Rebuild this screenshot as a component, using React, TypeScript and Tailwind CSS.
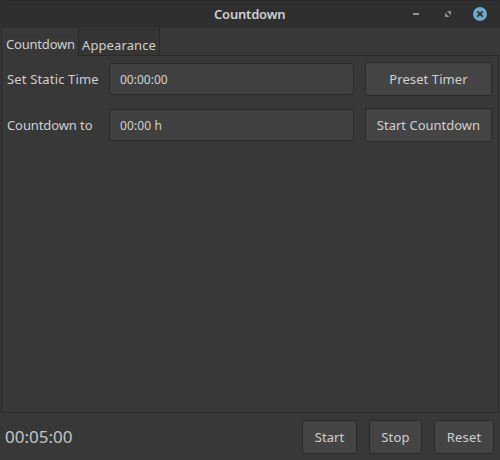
import type { ReactNode } from "react";

function Btn({ children, className = "" }: { children: ReactNode; className?: string }) {
  return (
    <button
      type="button"
      className={`flex h-[34px] shrink-0 items-center justify-center whitespace-nowrap rounded-[3px] border border-[#292929] bg-[#444444] pb-px ${className}`}
    >
      {children}
    </button>
  );
}

type RowProps = { label: string; labelClass: string; value: string; valueClass: string; action: string; actionClass: string };

function Row({ label, labelClass, value, valueClass, action, actionClass }: RowProps) {
  return (
    <div className="flex h-[34px] items-center">
      <label className={`w-[102px] shrink-0 whitespace-nowrap pb-px ${labelClass}`}>{label}</label>
      <div
        className={`flex h-8 w-[245px] shrink-0 items-center rounded-[3px] border border-[#292929] bg-[#404040] pl-[10px] pt-px ${valueClass}`}
      >
        {value}
      </div>
      <Btn className={`ml-[11px] w-[127px] ${actionClass}`}>{action}</Btn>
    </div>
  );
}

export default function App() {
  return (
    <div className="flex h-[460px] w-[500px] flex-col overflow-hidden bg-[#383838] font-['Noto_Sans',sans-serif] text-[13px] leading-4 text-[#d0d0d0]">
      <header className="flex h-7 shrink-0 items-center rounded-t-[3px] border-t border-[#292929] bg-[#2f2f2f]">
        <div className="w-[412px] pb-[2px] pl-[214px] text-[13px] font-semibold tracking-[-0.2px]">Countdown</div>
        <svg width="88" height="27" viewBox="412 1 88 27">
          <rect x="413" y="13" width="6" height="2" fill="#969696" />
          <path d="M447 11h4v4.5zM445 12.5v4.5h4.5z" fill="#8c8c8c" />
          <circle cx="480" cy="14" r="7" fill="#6cabcd" />
          <path d="M477.3 11.3l5.4 5.4m0-5.4l-5.4 5.4" stroke="#2f2f2f" strokeWidth="1.8" />
        </svg>
      </header>
      <nav className="flex h-7 shrink-0 px-px">
        <div className="flex w-[77px] shrink-0 items-center border-l border-[#292929] pl-1 pt-1">
          <span className="whitespace-nowrap border-y border-dotted border-[#333333] tracking-[-0.2px]">Countdown</span>
        </div>
        <div className="mt-px flex w-[82px] shrink-0 items-center border border-[#292929] bg-[#353535] pl-[3px] pt-1">
          <span className="tracking-[0.1px]">Appearance</span>
        </div>
        <div className="flex-1 border-b border-[#292929]" />
      </nav>
      <main className="mx-px flex h-[357px] shrink-0 flex-col gap-3 border border-t-0 border-[#292929] pl-[5px] pt-[6px]">
        <Row label="Set Static Time" labelClass="tracking-[0.16px]" value="00:00:00" valueClass="text-[12px]" action="Preset Timer" actionClass="tracking-[0.08px]" />
        <Row label="Countdown to" labelClass="tracking-[-0.1px]" value="00:00 h" valueClass="text-[12px] tracking-[0.1px]" action="Start Countdown" actionClass="" />
      </main>
      <footer className="flex flex-1 items-start pt-[7px]">
        <div className="w-[302px] pl-[5px] pt-[9px] text-[17px] leading-4 text-[#c4c4c4]">00:05:00</div>
        <Btn className="w-[55px] tracking-[0.1px]">Start</Btn>
        <Btn className="ml-3 w-[53px] tracking-[0.2px]">Stop</Btn>
        <Btn className="ml-3 w-[60px] tracking-[0.2px]">Reset</Btn>
      </footer>
    </div>
  );
}
